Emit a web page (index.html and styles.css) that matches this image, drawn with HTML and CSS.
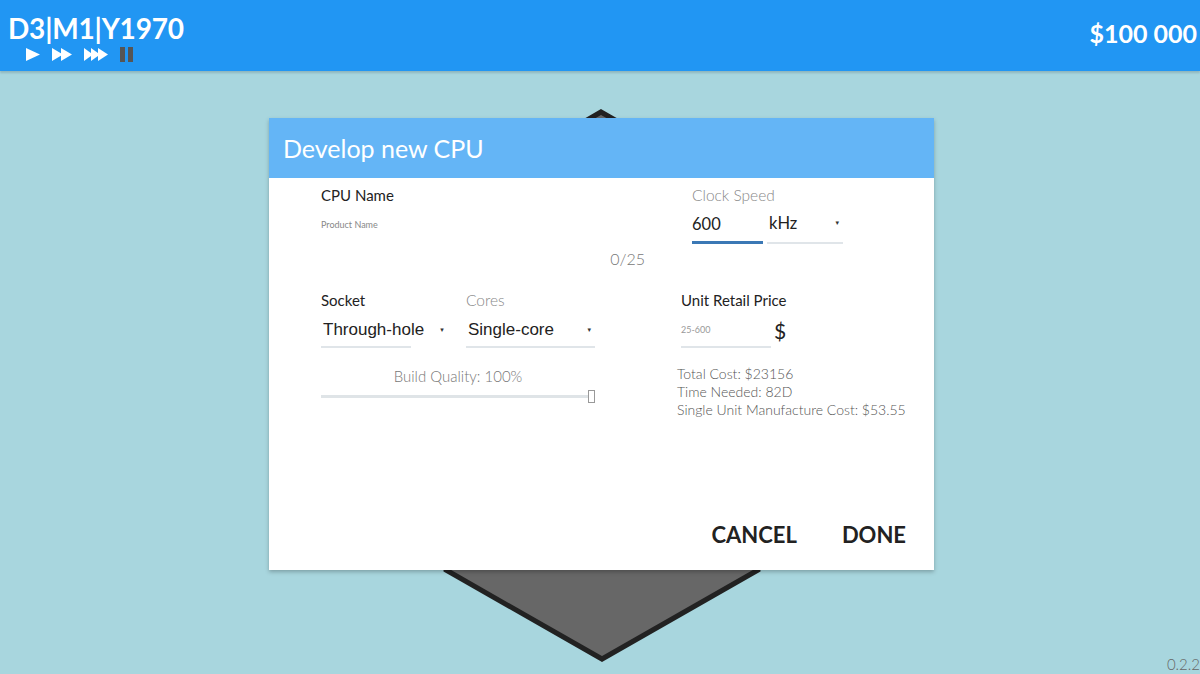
FILE: index.html
```html
<!DOCTYPE html>
<html lang="en">
<head>
    <meta charset="UTF-8">
    <meta name="viewport" content="width=device-width, initial-scale=1.0">
    <title>CPU Tycoon</title>
    <link rel="stylesheet" href="styles.css">
</head>
<body>
    <header class="topbar">
        <div class="date-box">
            <div class="date">D3|M1|Y1970</div>
            <div class="speed-controls">
                <svg class="speed" width="16" height="15" viewBox="0 0 16 15"><polygon points="1,1 15,7.5 1,14" fill="#fff"/></svg>
                <svg class="speed" width="22" height="15" viewBox="0 0 22 15"><polygon points="1,1 12,7.5 1,14" fill="#fff"/><polygon points="10,1 21,7.5 10,14" fill="#fff"/></svg>
                <svg class="speed" width="26" height="15" viewBox="0 0 26 15"><polygon points="1,1 10,7.5 1,14" fill="#fff"/><polygon points="8,1 17,7.5 8,14" fill="#fff"/><polygon points="15,1 25,7.5 15,14" fill="#fff"/></svg>
                <svg class="speed" width="16" height="15" viewBox="0 0 16 15"><rect x="1" y="0" width="5" height="15" fill="#555"/><rect x="9" y="0" width="5" height="15" fill="#555"/></svg>
            </div>
        </div>
        <div class="money">$100 000</div>
    </header>

    <main class="stage">
        <!-- chip tile on the board -->
        <svg class="tile" width="1200" height="674" viewBox="0 0 1200 674">
            <polygon points="601,112 758,202 758,570 602,659 446,570 446,202" fill="#676767" stroke="#222" stroke-width="5" stroke-linejoin="miter"/>
        </svg>

        <div class="dialog">
            <div class="dialog-title">Develop new CPU</div>
            <div class="dialog-body">
                <div class="col-left">
                    <div class="label dark">CPU Name</div>
                    <div class="name-field">
                        <div class="hint">Product Name</div>
                        <div class="counter">0/25</div>
                    </div>
                </div>
                <div class="col-right">
                    <div class="clock">
                        <div class="label light">Clock Speed</div>
                        <div class="clock-row">
                            <div class="clock-input">600</div>
                            <div class="unit-select">
                                <span>kHz</span>
                                <span class="arrow">&#9662;</span>
                            </div>
                        </div>
                    </div>
                </div>

                <div class="col-left">
                    <div class="select-row">
                        <div class="select-group socket">
                            <div class="label dark">Socket</div>
                            <div class="select short">
                                <span>Through-hole</span>
                                <span class="arrow">&#9662;</span>
                            </div>
                        </div>
                        <div class="select-group cores">
                            <div class="label light">Cores</div>
                            <div class="select wide">
                                <span>Single-core</span>
                                <span class="arrow">&#9662;</span>
                            </div>
                        </div>
                    </div>
                    <div class="quality">Build Quality: 100%</div>
                    <div class="slider">
                        <div class="track"></div>
                        <div class="thumb"></div>
                    </div>
                </div>
                <div class="col-right">
                    <div class="label dark">Unit Retail Price</div>
                    <div class="price-row">
                        <div class="price-input">25-600</div>
                        <div class="currency">$</div>
                    </div>
                    <div class="stats">
                        <div>Total Cost: $23156</div>
                        <div>Time Needed: 82D</div>
                        <div>Single Unit Manufacture Cost: $53.55</div>
                    </div>
                </div>
            </div>
            <div class="dialog-actions">
                <button class="action">CANCEL</button>
                <button class="action">DONE</button>
            </div>
        </div>

        <div class="version">0.2.2</div>
    </main>
</body>
</html>
```

FILE: styles.css
```css
html, body {
    margin: 0;
    height: 100%;
}
body {
    font-family: Lato, "Open Sans", sans-serif;
    background-color: #a8d6de;
    overflow: hidden;
}
.topbar {
    height: 71px;
    background-color: #2196f3;
    color: #fff;
    display: flex;
    justify-content: space-between;
    box-shadow: 0 2px 2px rgba(0, 0, 0, 0.15);
    position: relative;
    z-index: 2;
}
.date-box {
    padding: 12px 0 0 8px;
}
.date {
    font-size: 28px;
    line-height: 32px;
    font-weight: bold;
    letter-spacing: -0.2px;
}
.speed-controls {
    display: flex;
    align-items: center;
    gap: 10px;
    margin: 3px 0 0 17px;
}
.speed {
    display: block;
}
.money {
    font-size: 25px;
    font-weight: bold;
    padding: 18px 3px 0 0;
}
.stage {
    position: relative;
    height: calc(100% - 71px);
}
.tile {
    position: absolute;
    left: 0;
    top: -71px;
}
.dialog {
    position: absolute;
    left: 269px;
    top: 47px;
    width: 665px;
    height: 452px;
    background: #fff;
    box-shadow: 0 2px 4px rgba(0, 0, 0, 0.25);
    display: flex;
    flex-direction: column;
}
.dialog-title {
    height: 60px;
    background-color: #64b5f6;
    color: #fff;
    font-size: 25px;
    line-height: 60px;
    padding-left: 14px;
}
.dialog-body {
    display: grid;
    grid-template-columns: 360px 1fr;
    row-gap: 23px;
    padding: 8px 28px 0 52px;
}
.label {
    font-size: 15px;
    line-height: 18px;
}
.label.dark {
    color: #222;
}
.label.light {
    color: #888;
    font-weight: 300;
    font-size: 15.5px;
}
.name-field {
    width: 324px;
}
.hint {
    font-size: 9px;
    line-height: 14px;
    color: #888;
    margin-top: 14px;
}
.counter {
    font-size: 16px;
    line-height: 18px;
    color: #777;
    font-weight: 300;
    text-align: right;
    margin-top: 18px;
}
.clock {
    margin-left: 11px;
}
.clock-row {
    display: flex;
    gap: 4px;
    margin-top: 10px;
}
.clock-input {
    width: 71px;
    font-size: 16.5px;
    line-height: 20px;
    color: #222;
    padding-bottom: 7px;
    border-bottom: 3px solid #3b78b5;
}
.unit-select {
    width: 74px;
    display: flex;
    justify-content: space-between;
    font-size: 16.5px;
    line-height: 18px;
    color: #222;
    padding: 0 0 10px 2px;
    border-bottom: 2px solid #e0e5e9;
}
.arrow {
    font-family: "DejaVu Sans", sans-serif;
    font-size: 7px;
    color: #333;
    padding-right: 4px;
}
.select-row {
    display: flex;
}
.select-group.socket {
    width: 145px;
}
.select {
    display: flex;
    justify-content: space-between;
    white-space: nowrap;
    font-family: "Liberation Sans", Arial, sans-serif;
    font-size: 17px;
    line-height: 20px;
    color: #222;
    margin-top: 11px;
    padding: 0 0 6px 2px;
    border-bottom: 2px solid #e0e5e9;
}
.select.short {
    width: 88px;
    gap: 16px;
}
.select.wide {
    width: 127px;
}
.quality {
    width: 274px;
    text-align: center;
    font-size: 15px;
    line-height: 18px;
    color: #777;
    font-weight: 300;
    margin-top: 19px;
}
.slider {
    width: 274px;
    height: 22px;
    display: flex;
    align-items: center;
}
.track {
    flex: 1;
    height: 3px;
    background-color: #dfe4e7;
}
.thumb {
    width: 5px;
    height: 11px;
    border: 1px solid #999;
    background: #fff;
    margin-left: -4px;
}
.price-row {
    display: flex;
    align-items: flex-start;
    margin-top: 11px;
}
.price-input {
    width: 90px;
    font-size: 9px;
    line-height: 20px;
    color: #999;
    padding-bottom: 6px;
    border-bottom: 2px solid #e0e5e9;
}
.currency {
    font-size: 21px;
    line-height: 24px;
    color: #222;
    margin: -1px 0 0 3px;
}
.stats {
    margin: 17px 0 0 -4px;
    font-size: 14px;
    line-height: 18px;
    color: #555;
    font-weight: 300;
}
.dialog-actions {
    margin-top: auto;
    display: flex;
    justify-content: flex-end;
    gap: 45px;
    padding: 0 28px 23px 0;
}
.action {
    background: none;
    border: none;
    padding: 0;
    font-family: Lato, sans-serif;
    font-size: 22px;
    line-height: 24px;
    font-weight: bold;
    color: #222;
    cursor: pointer;
}
.version {
    position: absolute;
    right: 0;
    bottom: 1px;
    font-size: 15px;
    color: #666;
    font-weight: 300;
}
```
